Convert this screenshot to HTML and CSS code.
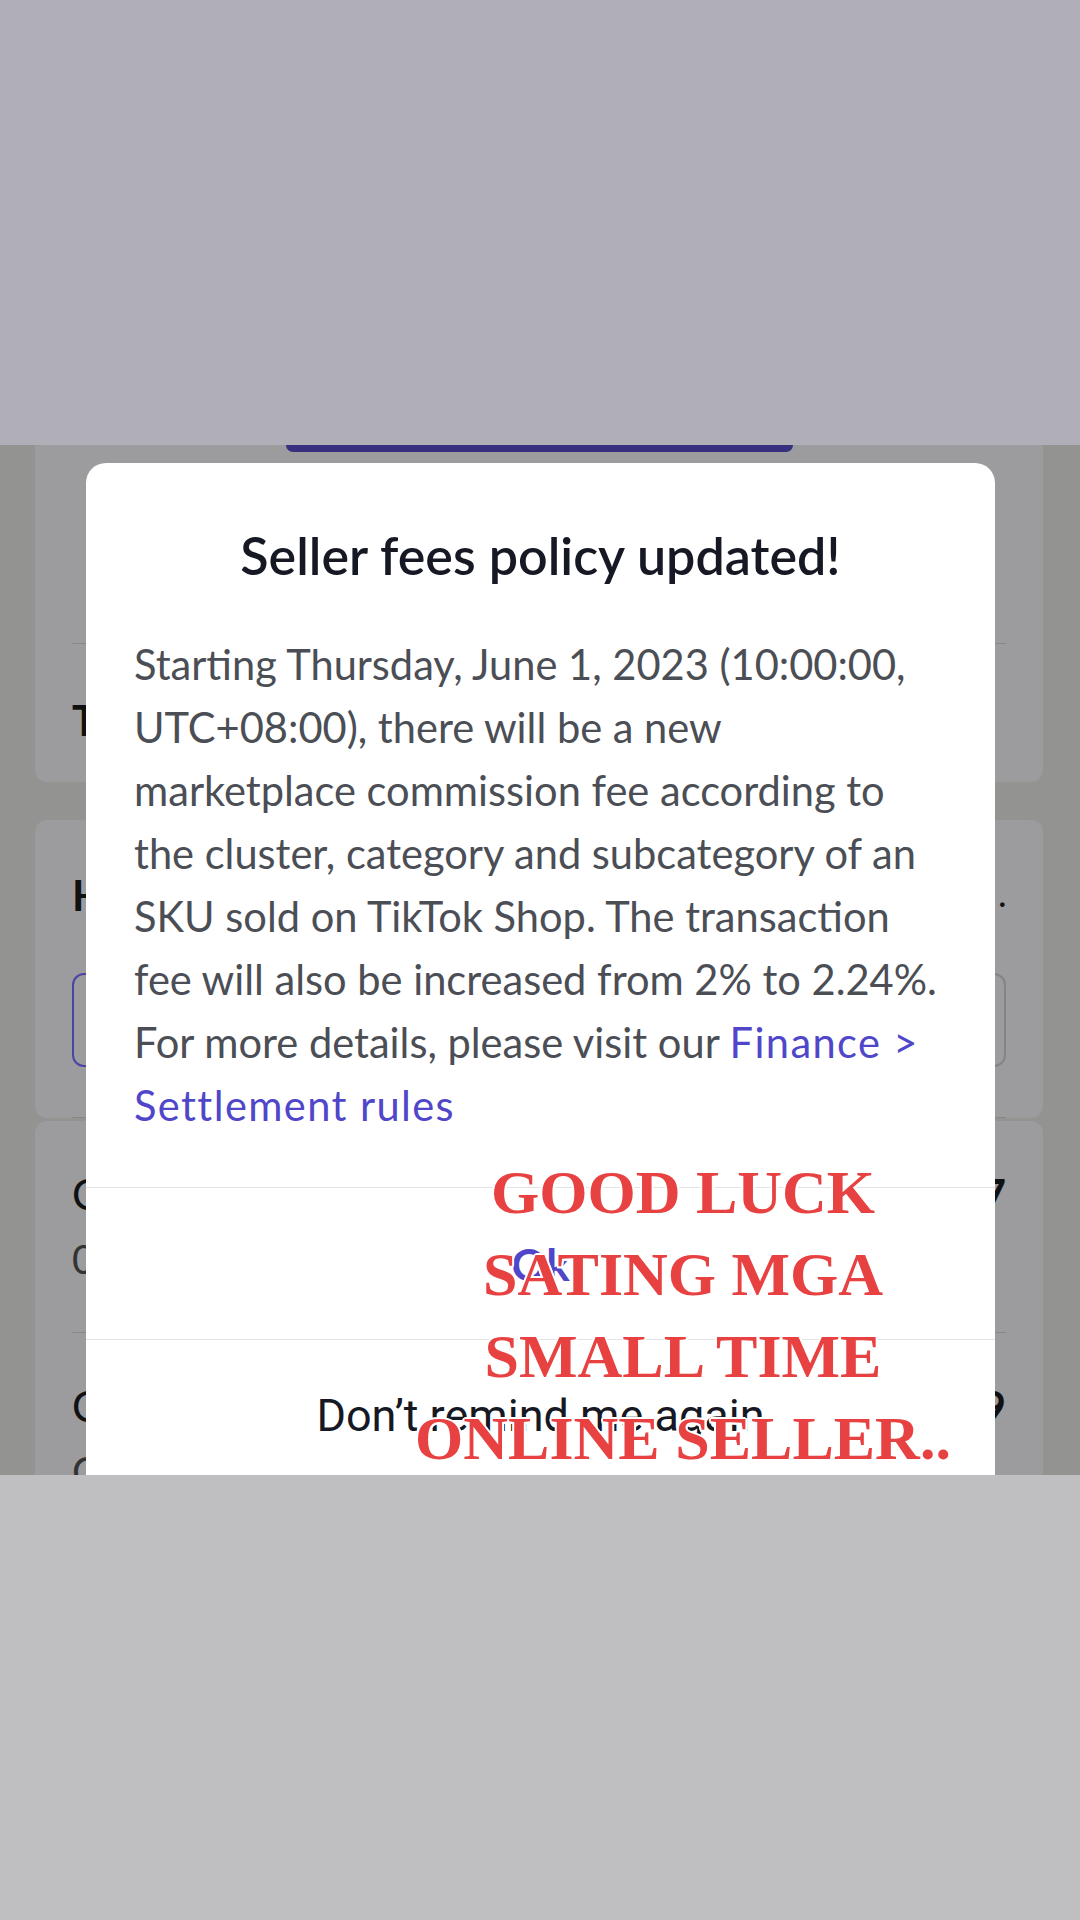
FILE: index.html
```html
<!DOCTYPE html>
<html lang="en">
<head>
  <meta charset="UTF-8">
  <meta name="viewport" content="width=device-width, initial-scale=1.0">
  <title>Seller fees policy updated</title>
  <link rel="stylesheet" href="styles.css">
</head>
<body>
  <div class="band band-top"></div>

  <div class="screen">
    <!-- the dimmed page behind the dialog -->
    <div class="page">
      <div class="card card-first">
        <div class="primary-bar"></div>
        <div class="divider divider-first"></div>
        <div class="row-title">Transaction fee</div>
      </div>

      <div class="card card-second">
        <div class="row-title row-head">
          <span>How fees are calculated</span>
          <span class="more">.</span>
        </div>
        <div class="choice-row">
          <div class="choice selected">Marketplace</div>
          <div class="choice">Shipping</div>
        </div>
        <div class="divider divider-second"></div>
      </div>

      <div class="card card-list">
        <div class="list-item">
          <div>
            <div class="item-name">Commission fee</div>
            <div class="item-sub">0.00%</div>
          </div>
          <div class="item-value">7</div>
        </div>
        <div class="list-item">
          <div>
            <div class="item-name">Clothing &amp; accessories</div>
            <div class="item-sub">Cluster A</div>
          </div>
          <div class="item-value">9</div>
        </div>
      </div>
    </div>

    <div class="modal">
      <div class="modal-title">Seller fees policy updated!</div>
      <p class="modal-body">
        Starting Thursday, June 1, 2023 (10:00:00,<br>
        UTC+08:00), there will be a new<br>
        marketplace commission fee according to<br>
        the cluster, category and subcategory of an<br>
        SKU sold on TikTok Shop. The transaction<br>
        fee will also be increased from 2% to 2.24%.<br>
        For more details, please visit our <a class="link" href="#">Finance &gt;<br>
        Settlement rules</a>
      </p>
      <div class="modal-action action-ok">Ok</div>
      <div class="modal-action action-dismiss">Don’t remind me again</div>
    </div>

    <div class="sticker">
      <div class="sticker-line">GOOD LUCK</div>
      <div class="sticker-line">SATING MGA</div>
      <div class="sticker-line">SMALL TIME</div>
      <div class="sticker-line">ONLINE SELLER..</div>
    </div>
  </div>

  <div class="band band-bottom"></div>
</body>
</html>
```

FILE: styles.css
```css
body {
  margin: 0;
  width: 1080px;
  height: 1920px;
  overflow: hidden;
  font-family: Lato, "Noto Sans", sans-serif;
}

.band {
  height: 445px;
}

.band-top {
  background: #b0afb8;
}

.band-bottom {
  background: #bfbfc2;
}

.screen {
  position: relative;
  height: 1030px;
  overflow: hidden;
}

/* page under the overlay */
.page {
  height: 100%;
  box-sizing: border-box;
  padding: 0 37px 0 35px;
  background: #939492;
}

.card {
  background: #9c9b9d;
  padding: 0 37px;
  border-radius: 12px;
}

.card-first {
  height: 337px;
  box-sizing: border-box;
  border-radius: 0 0 12px 12px;
}

.primary-bar {
  margin-left: 214px;
  width: 507px;
  height: 7px;
  background: #37307e;
  border-radius: 0 0 9px 9px;
}

.divider {
  height: 1px;
  background: #88888a;
}

.divider-first {
  margin-top: 191px;
}

.row-title {
  margin-top: 51px;
  font-size: 42px;
  line-height: 50px;
  font-weight: 700;
  color: #111;
}

.card-second {
  margin-top: 38px;
  padding-top: 50px;
}

.row-head {
  margin-top: 0;
  display: flex;
  justify-content: space-between;
}

.more {
  font-size: 30px;
}

.choice-row {
  margin-top: 53px;
  display: grid;
  grid-template-columns: 1fr 1fr;
  gap: 24px;
}

.choice {
  height: 94px;
  box-sizing: border-box;
  border: 2px solid #848486;
  border-radius: 12px;
  display: flex;
  align-items: center;
  justify-content: center;
  font-size: 38px;
  color: #222;
}

.choice.selected {
  border-color: #4a44a6;
}

.divider-second {
  margin-top: 50px;
}

.card-list {
  margin-top: 3px;
  border-radius: 12px 12px 0 0;
}

.list-item {
  display: flex;
  justify-content: space-between;
  align-items: flex-start;
  padding: 48px 0 48px;
  border-bottom: 1px solid #88888a;
}

.item-name {
  font-size: 42px;
  line-height: 50px;
  color: #111;
}

.item-sub {
  margin-top: 15px;
  font-size: 40px;
  line-height: 50px;
  color: #333;
}

.item-value {
  font-size: 44px;
  line-height: 50px;
  font-weight: 700;
  color: #111;
}

/* dialog */
.modal {
  position: absolute;
  top: 18px;
  left: 86px;
  width: 909px;
  height: 1100px;
  background: #fff;
  border-radius: 20px;
}

.modal-title {
  padding-top: 62px;
  font-size: 52px;
  line-height: 60px;
  font-weight: 600;
  text-align: center;
  color: #161823;
}

.modal-body {
  margin: 48px 48px 50px;
  font-size: 41.6px;
  line-height: 63px;
  color: #4b4e55;
  white-space: nowrap;
}

.link {
  color: #5046c9;
  text-decoration: none;
  letter-spacing: 1.4px;
}

.modal-action {
  height: 151px;
  border-top: 1px solid #e3e3e5;
  display: flex;
  align-items: center;
  justify-content: center;
  font-size: 44px;
}

.action-ok {
  color: #5046c9;
  font-weight: 700;
}

.action-dismiss {
  font-family: Roboto, "Noto Sans", sans-serif;
  font-size: 45px;
  color: #161823;
}

/* red caption pasted over the screenshot */
.sticker {
  position: absolute;
  top: 706px;
  left: 383px;
  width: 600px;
  text-align: center;
  font-family: "Liberation Serif", "Times New Roman", serif;
  font-weight: 700;
  font-size: 62px;
  line-height: 82px;
  color: #e84142;
  white-space: nowrap;
  text-shadow:
    2px 0 #fff, -2px 0 #fff, 0 2px #fff, 0 -2px #fff,
    1.5px 1.5px #fff, -1.5px -1.5px #fff, 1.5px -1.5px #fff, -1.5px 1.5px #fff;
}
```
